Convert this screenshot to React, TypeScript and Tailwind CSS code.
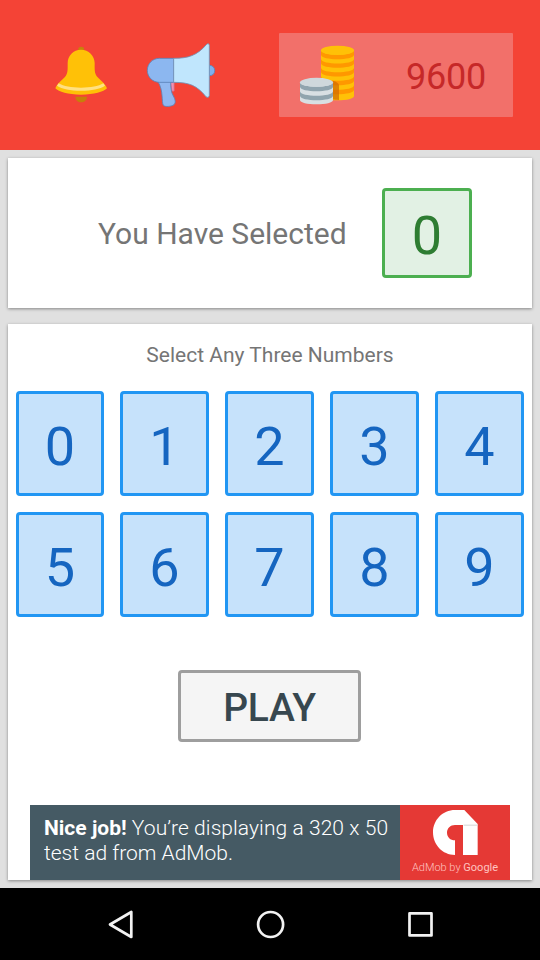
const NUMBERS = [0, 1, 2, 3, 4, 5, 6, 7, 8, 9];

const cardClass = "bg-white shadow-[0_1px_3px_rgba(0,0,0,0.4)]";

function BellIcon() {
  return (
    <svg viewBox="42 45 162 180" className="h-[60px] w-[54px]" aria-hidden="true">
      <path d="M106 200h35c0 10-8 17-17.500 17s-17.500-7-17.500-17z" fill="#c77f0a" />
      <circle cx="123.500" cy="59" r="9" fill="#c7830a" />
      <path
        d="M123 59C100 59 83 77 83 99c0 22 1 32-9 43-10 11-22 18-28 33 10 11 38 19 77 19s68-8 78-19c-6-15-18-22-28-33-10-11-9-21-9-43 0-22-18-40-41-40z"
        fill="#ffc107"
      />
      <path
        d="M56 160c15 9 38 13 67 13s52-4 67-13l5 7c-15 10-40 15-72 15s-57-5-72-15z"
        fill="#ffe082"
      />
    </svg>
  );
}

function MegaphoneIcon() {
  return (
    <svg viewBox="315 30 216 210" className="h-[70px] w-[72px]" aria-hidden="true">
      <g strokeWidth="2.500" strokeLinejoin="round">
        <path d="M392 157h10v26h-6z" fill="#f48fb1" stroke="#d5799b" />
        <path
          d="M354 155h38c0 18 1 31 8 43 6 11 8 20 2 26-6 5-27 8-32 2-6-10 1-44-16-71z"
          fill="#90b8f0"
          stroke="#5c83b8"
        />
        <path d="M508 106c10 0 16 7 16 16s-6 15-16 15z" fill="#7fb0ee" stroke="#5c83b8" />
        <path d="M401 85h-43c-20 0-36 16-36 36s16 36 36 36h43z" fill="#8cb7f0" stroke="#5c83b8" />
        <path
          d="M401 85c45 0 70-9 98-41 3-4 9-4 9 2v150c0 6-6 8-10 4-27-33-49-43-97-43z"
          fill="#c0e6fd"
          stroke="#6f93b8"
        />
      </g>
    </svg>
  );
}

function CoinsIcon() {
  return (
    <svg viewBox="84 69 174 186" className="h-[62px] w-[58px]" aria-hidden="true">
      <path d="M153 88h99v137c0 8-22 13-49.500 13S153 233 153 225z" fill="#ffc107" />
      <g fill="#ff9800">
        <path d="M153 88c0 18 99 18 99 0v13c0 18-99 18-99 0z" />
        <path d="M153 114c0 18 99 18 99 0v13c0 18-99 18-99 0z" />
        <path d="M153 140c0 18 99 18 99 0v13c0 18-99 18-99 0z" />
        <path d="M153 166c0 18 99 18 99 0v13c0 18-99 18-99 0z" />
        <path d="M153 193c0 18 99 18 99 0v13c0 18-99 18-99 0z" />
      </g>
      <ellipse cx="202.500" cy="88" rx="49.500" ry="14" fill="#ffc107" />
      <path d="M188 179c12 3 19 8 19 14v44c-8 0-14-1-19-2z" fill="#d06a00" fillOpacity=".7" />
      <path d="M90 184h99v53c0 8-22 13-49.500 13S90 245 90 237z" fill="#d8dfe3" />
      <g fill="#90a4ae">
        <path d="M90 184c0 18 99 18 99 0v13c0 18-99 18-99 0z" />
        <path d="M90 211c0 18 99 18 99 0v13c0 18-99 18-99 0z" />
      </g>
      <ellipse cx="139.500" cy="184" rx="49.500" ry="13.500" fill="#cfd8dc" />
    </svg>
  );
}

function AdMobLogo() {
  return (
    <svg viewBox="156 42 141 141" className="h-[47px] w-[47px]" aria-hidden="true">
      <path
        d="M225 45h28l40 42v93h-44V90h-24c-14 0-24 10-24 23s10 23 24 23v44c-38 0-66-31-66-68s29-67 66-67z"
        fill="#fff"
      />
      <path d="M251 89h42v3h-42z" fill="#d5d5d5" />
    </svg>
  );
}

function Header({ coins }: { coins: number }) {
  return (
    <header className="flex h-[150px] items-start bg-[#f44336] pl-[54px]">
      <button type="button" aria-label="Notifications" className="mt-[45px]">
        <BellIcon />
      </button>
      <button type="button" aria-label="Announcements" className="mt-10 ml-[37px]">
        <MegaphoneIcon />
      </button>
      <div className="mt-[33px] ml-[62px] flex h-[84px] w-[234px] items-center rounded-[1px] bg-[#f2706a] pl-[19px]">
        <CoinsIcon />
        <span className="mt-1 ml-[50px] text-[36px] leading-none tracking-[-0.2px] text-[#c62828]">
          {coins}
        </span>
      </div>
    </header>
  );
}

function AdBanner() {
  return (
    <div className="mx-[22px] mt-auto flex h-[75px] text-white">
      <p className="w-[370px] bg-[#455a64] pt-[11px] pl-[14px] text-[21px] leading-[25px] font-light whitespace-nowrap">
        <b className="font-bold">Nice job!</b>{" "}
        <span className="tracking-[0.07px]">You’re displaying a 320 x 50</span>
        <br />
        test ad from AdMob.
      </p>
      <div className="flex flex-1 flex-col items-center bg-[#e53935] pt-1">
        <AdMobLogo />
        <span className="mt-[5px] text-[11px] leading-[14px] font-light whitespace-nowrap text-[#ffc4c0]">
          AdMob by <span className="font-normal">Google</span>
        </span>
      </div>
    </div>
  );
}

function NavBar() {
  return (
    <nav className="flex h-[72px] items-center justify-between bg-black px-[105px]">
      <svg viewBox="0 0 30 30" className="size-[30px]" fill="none" stroke="#f2f2f2" strokeWidth="2.700" strokeLinejoin="round">
        <path d="M26.300 3v25L5 15.500z" />
      </svg>
      <svg viewBox="0 0 30 30" className="size-[30px]" fill="none" stroke="#f2f2f2" strokeWidth="2.700">
        <circle cx="15.600" cy="15.500" r="12.500" />
      </svg>
      <svg viewBox="0 0 30 30" className="size-[30px]" fill="none" stroke="#f2f2f2" strokeWidth="2.700" strokeLinejoin="round">
        <path d="M4.500 4.400h22v22h-22z" />
      </svg>
    </nav>
  );
}

export default function App() {
  const selected = 0;

  return (
    <div className="flex h-[960px] w-[540px] flex-col overflow-hidden bg-[#e0e0e0] font-['Roboto',sans-serif]">
      <Header coins={9600} />

      <main className="flex flex-1 flex-col gap-4 px-2 pt-2 pb-2">
        <section className={`flex h-[150px] items-center pl-[90px] ${cardClass}`}>
          <h1 className="w-[284px] text-[30px] whitespace-nowrap text-[#757575]">You Have Selected</h1>
          <div className="flex size-[90px] items-center justify-center rounded-[4px] border-3 border-[#4caf50] bg-[#e2f1e4] text-[54px] leading-none text-[#2e7d32]">
            <span className="mt-1.5">{selected}</span>
          </div>
        </section>

        <section className={`flex flex-1 flex-col ${cardClass}`}>
          <h2 className="mt-4 text-center text-[21px] leading-[30px] text-[#757575]">
            Select Any Three Numbers
          </h2>
          <div className="mx-2 mt-[21px] grid grid-cols-[88px_89px_89px_89px_89px] gap-4">
            {NUMBERS.map((n) => (
              <button
                key={n}
                type="button"
                className="h-[105px] rounded-[4px] border-3 border-[#2196f3] bg-[#c6e2fb] pt-1.5 text-[54px] leading-none text-[#1565c0]"
              >
                {n}
              </button>
            ))}
          </div>
          <button
            type="button"
            className="mt-[53px] ml-[170px] h-[72px] w-[183px] rounded-[4px] border-3 border-[#9e9e9e] bg-[#f5f5f5] pt-1 text-[39px] leading-none font-medium tracking-[-0.3px] text-[#37474f]"
          >
            PLAY
          </button>
          <AdBanner />
        </section>
      </main>

      <NavBar />
    </div>
  );
}
